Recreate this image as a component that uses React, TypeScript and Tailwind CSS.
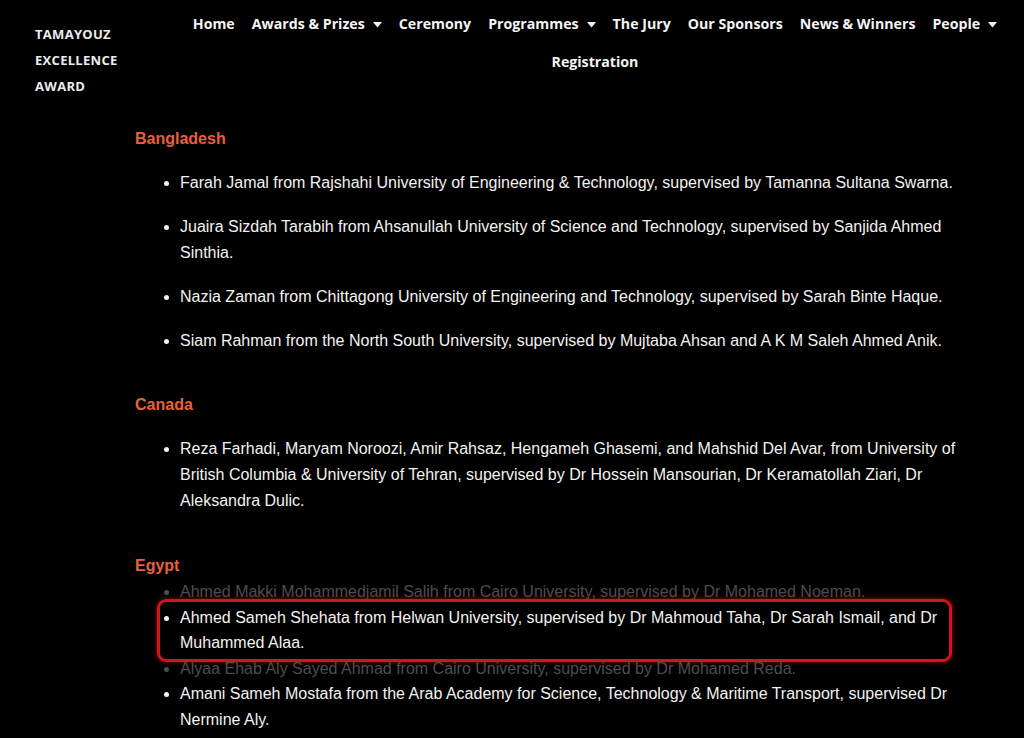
import React from 'react';

const navItems = [
  { label: 'Home' },
  { label: 'Awards & Prizes', caret: true },
  { label: 'Ceremony' },
  { label: 'Programmes', caret: true },
  { label: 'The Jury' },
  { label: 'Our Sponsors' },
  { label: 'News & Winners' },
  { label: 'People', caret: true },
  { label: 'Registration' },
];

function Caret() {
  return (
    <svg width="9" height="6" viewBox="0 0 9 6" className="ml-[8px] mt-[1px]">
      <polygon points="0,0 9,0 4.5,5.5" fill="#f2f2f2" />
    </svg>
  );
}

type Entry = { text: string; faded?: boolean; marked?: boolean };

const sections: { country: string; gap: string; list: string; entries: Entry[] }[] = [
  {
    country: 'Bangladesh',
    gap: '',
    list: 'mt-[18px] space-y-[18px] leading-[26px]',
    entries: [
      { text: 'Farah Jamal from Rajshahi University of Engineering & Technology, supervised by Tamanna Sultana Swarna.' },
      { text: 'Juaira Sizdah Tarabih from Ahsanullah University of Science and Technology, supervised by Sanjida Ahmed Sinthia.' },
      { text: 'Nazia Zaman from Chittagong University of Engineering and Technology, supervised by Sarah Binte Haque.' },
      { text: 'Siam Rahman from the North South University, supervised by Mujtaba Ahsan and A K M Saleh Ahmed Anik.' },
    ],
  },
  {
    country: 'Canada',
    gap: 'mt-[38px]',
    list: 'mt-[18px] space-y-[18px] leading-[26px]',
    entries: [
      { text: 'Reza Farhadi, Maryam Noroozi, Amir Rahsaz, Hengameh Ghasemi, and Mahshid Del Avar, from University of British Columbia & University of Tehran, supervised by Dr Hossein Mansourian, Dr Keramatollah Ziari, Dr Aleksandra Dulic.' },
    ],
  },
  {
    country: 'Egypt',
    gap: 'mt-[39px]',
    list: 'leading-[25.6px]',
    entries: [
      { text: 'Ahmed Makki Mohammedjamil Salih from Cairo University, supervised by Dr Mohamed Noeman.', faded: true },
      { text: 'Ahmed Sameh Shehata from Helwan University, supervised by Dr Mahmoud Taha, Dr Sarah Ismail, and Dr Muhammed Alaa.', marked: true },
      { text: 'Alyaa Ehab Aly Sayed Ahmad from Cairo University, supervised by Dr Mohamed Reda.', faded: true },
      { text: 'Amani Sameh Mostafa from the Arab Academy for Science, Technology & Maritime Transport, supervised Dr Nermine Aly.' },
    ],
  },
];

export default function App() {
  return (
    <div className="min-h-[738px] bg-black text-[#f2f2f2] overflow-hidden">
      {/* Header */}
      <header className="flex items-start">
        <div
          className="w-[185px] pl-[35px] pt-[21px] text-[13px] font-bold leading-[26px] tracking-[0.3px] text-[#ededed]"
          style={{ fontFamily: '"Open Sans", sans-serif' }}
        >
          <div>TAMAYOUZ</div>
          <div>EXCELLENCE</div>
          <div>AWARD</div>
        </div>
        <nav
          className="w-[820px] pt-[5px] flex flex-wrap content-start justify-center gap-x-[17px] text-[14.2px] font-bold"
          style={{ fontFamily: '"Open Sans", sans-serif' }}
        >
          {navItems.map(item => (
            <a key={item.label} className="h-[38px] flex items-center text-[#f4f4f4]">
              {item.label}
              {item.caret && <Caret />}
            </a>
          ))}
        </nav>
      </header>

      {/* Winners list */}
      <main
        className="ml-[135px] w-[832px] mt-[27px]"
        style={{ fontFamily: '"Liberation Sans", Arial, sans-serif' }}
      >
        {sections.map(section => (
          <section key={section.country} className={section.gap}>
            <h3 className="text-[16px] font-bold leading-[26px] text-[#e8603e]">{section.country}</h3>
            <ul className={`list-disc pl-[45px] text-[16px] ${section.list}`}>
              {section.entries.map(entry => (
                <li
                  key={entry.text}
                  className={`relative ${entry.faded ? 'text-[#4d4d4d]' : 'text-[#f2f2f2]'}`}
                >
                  {entry.text}
                  {entry.marked && (
                    <span className="absolute -left-[23px] right-[15px] -top-[6px] -bottom-[6px] rounded-[9px] border-[3px] border-[#d4141c] shadow-[0_0_5px_rgba(230,30,30,0.6)] pointer-events-none" />
                  )}
                </li>
              ))}
            </ul>
          </section>
        ))}
      </main>
    </div>
  );
}
